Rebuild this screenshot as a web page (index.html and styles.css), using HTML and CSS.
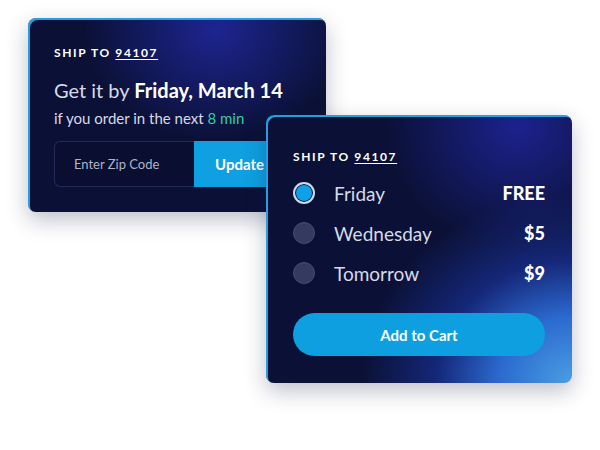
FILE: index.html
```html
<!DOCTYPE html>
<html>
<head>
<meta charset="utf-8">
<link rel="stylesheet" href="styles.css">
</head>
<body>
<div class="stage">
  <div class="card card-eta">
    <div class="ship">SHIP TO <span class="zip">94107</span></div>
    <div class="headline">Get it by <b>Friday, March 14</b></div>
    <div class="sub">if you order in the next <span class="mins">8 min</span></div>
    <div class="zipform">
      <div class="zipinput">Enter Zip Code</div>
      <div class="update">Update</div>
    </div>
  </div>
  <div class="card card-options">
    <div class="ship">SHIP TO <span class="zip">94107</span></div>
    <div class="options">
      <div class="option">
        <span class="radio selected"></span>
        <span class="label">Friday</span>
        <span class="price">FREE</span>
      </div>
      <div class="option">
        <span class="radio"></span>
        <span class="label">Wednesday</span>
        <span class="price">$5</span>
      </div>
      <div class="option">
        <span class="radio"></span>
        <span class="label">Tomorrow</span>
        <span class="price">$9</span>
      </div>
    </div>
    <div class="cart">Add to Cart</div>
  </div>
</div>
</body>
</html>
```
FILE: styles.css
```css
* { box-sizing: border-box; }
html, body { margin: 0; padding: 0; background: #fff; }
body { font-family: "Lato", "Noto Sans", sans-serif; color: #fff; }

.stage {
  position: relative;
  width: 600px;
  height: 450px;
  padding: 18px 0 0 28px;
  background: #fff;
}

.card {
  border-radius: 8px;
  box-shadow: inset 2px 2px 0 rgba(40, 165, 235, 0.95), 0 8px 22px rgba(20, 30, 70, 0.28);
}

.card-eta {
  width: 298px;
  height: 194px;
  padding: 27px 27px 0 26px;
  background:
    radial-gradient(ellipse 130px 110px at 63% 6%, rgba(30, 38, 150, 0.95) 0%, rgba(30, 38, 150, 0) 100%),
    #0b1136;
  display: flex;
  flex-direction: column;
}

.ship {
  font-size: 12px;
  line-height: 16px;
  font-weight: 700;
  letter-spacing: 1.6px;
  color: #fff;
}
.zip { text-decoration: underline; text-underline-offset: 2px; }

.headline {
  margin-top: 16px;
  font-size: 20px;
  line-height: 26px;
  color: #d6dae8;
}
.headline b { color: #fff; font-weight: 700; }

.sub {
  margin-top: 5px;
  font-size: 15px;
  line-height: 20px;
  color: #d6dae8;
}
.mins { color: #2fcf9f; }

.zipform {
  margin-top: 13px;
  display: flex;
  height: 46px;
}
.zipinput {
  width: 140px;
  border: 1px solid #232a58;
  border-right: none;
  border-radius: 6px 0 0 6px;
  background: #0a0f31;
  color: #aeb3c9;
  font-size: 13px;
  display: flex;
  align-items: center;
  padding-left: 19px;
}
.update {
  flex: 1;
  background: #0ea0e0;
  color: #fff;
  font-weight: 700;
  font-size: 15px;
  display: flex;
  align-items: center;
  padding-left: 21px;
  border-radius: 0 6px 6px 0;
}

.card-options {
  position: absolute;
  left: 266px;
  top: 115px;
  width: 306px;
  height: 268px;
  padding: 34px 27px 0 27px;
  background:
    radial-gradient(ellipse 130px 120px at 82% 4%, rgba(30, 36, 150, 0.9) 0%, rgba(30, 36, 150, 0) 100%),
    radial-gradient(ellipse 210px 190px at 100% 100%, #4a9fe2 0%, rgba(45, 110, 215, 0.95) 35%, rgba(30, 60, 185, 0.5) 65%, rgba(28, 50, 170, 0) 100%),
    #0b1136;
  display: flex;
  flex-direction: column;
}

.options {
  margin-top: 8px;
  display: flex;
  flex-direction: column;
}
.option {
  height: 40px;
  display: flex;
  align-items: center;
}
.radio {
  width: 22px;
  height: 22px;
  border-radius: 50%;
  background: #353b60;
  border: 1px solid #474e74;
  flex: none;
}
.radio.selected {
  background: #0ea0e8;
  border: 2px solid #d0d8ea;
  box-shadow: inset 0 0 0 1px #0b1136;
}
.label {
  margin-left: 19px;
  font-size: 19px;
  color: #d6dae8;
  flex: 1;
}
.price {
  font-size: 18px;
  font-weight: 900;
  color: #fff;
}

.cart {
  margin-top: 20px;
  height: 43px;
  border-radius: 22px;
  background: #0e9fe0;
  color: #fff;
  font-weight: 700;
  font-size: 15px;
  display: flex;
  align-items: center;
  justify-content: center;
}
```
